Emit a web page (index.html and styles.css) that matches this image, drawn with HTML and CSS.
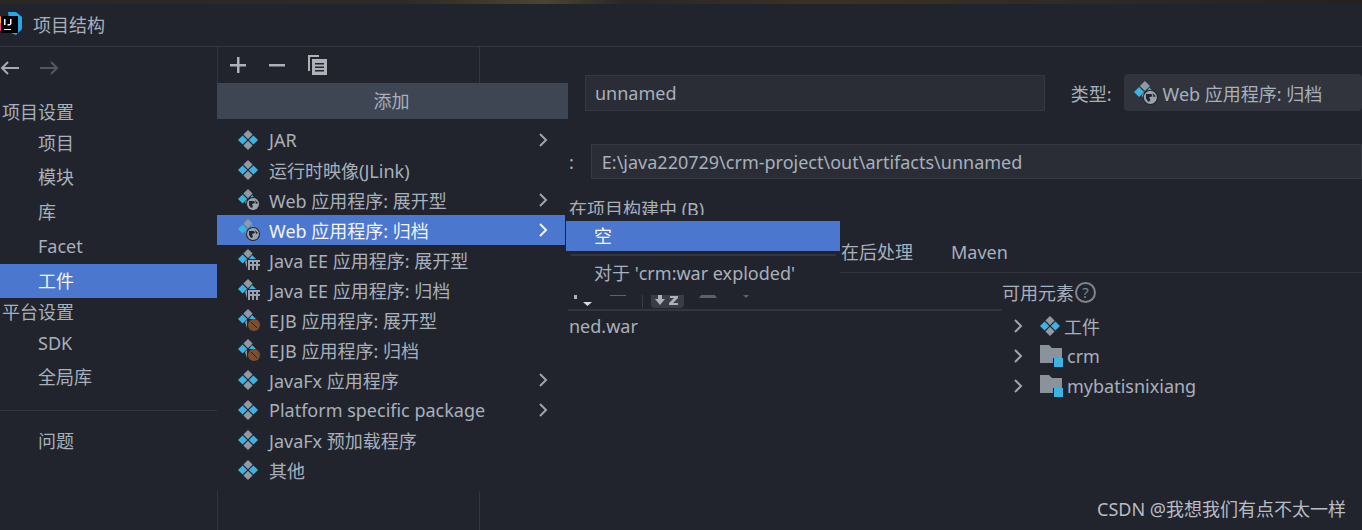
FILE: index.html
```html
<!DOCTYPE html>
<html lang="zh-CN">
<head>
    <meta charset="UTF-8">
    <meta name="viewport" content="width=device-width, initial-scale=1.0">
    <title>项目结构</title>
    <link rel="stylesheet" href="styles.css">
</head>
<body>
    <svg class="defs" width="0" height="0">
        <symbol id="art" viewBox="0 0 20 20">
            <path fill="#8f9aa5" d="M10 0l4.600 4.600-4.600 4.600-4.600-4.600zM10 10.800l4.600 4.600-4.600 4.600-4.600-4.600z"/>
            <path fill="#3db3e3" d="M4.600 5.400l4.600 4.600-4.600 4.600L0 10zM15.400 5.400L20 10l-4.600 4.600-4.600-4.600z"/>
        </symbol>
        <symbol id="art-web" viewBox="0 0 22 22">
            <path fill="#8f9aa5" d="M10 0l4.600 4.600-4.600 4.600-4.600-4.600zM7 13l2-2 2 2-2 4z"/>
            <path fill="#3db3e3" d="M4.600 5.400l4.600 4.600-4.600 4.600L0 10zM14 6l3.500 3.500H12z"/>
            <circle cx="15" cy="15" r="7" fill="#21242d"/>
            <circle cx="15" cy="15" r="6" fill="#9aa3ad"/>
            <path fill="#21242d" d="M11 12h5l1 2-3 1 1 3-2 1-2-3zM17 11l3 3-2 1z"/>
        </symbol>
        <symbol id="art-ee" viewBox="0 0 22 22">
            <path fill="#8f9aa5" d="M10 0l4.600 4.600-4.600 4.600-4.600-4.600zM7 13l2-2v8z"/>
            <path fill="#3db3e3" d="M4.600 5.400l4.600 4.600-4.600 4.600L0 10zM14 6l4 4h-7z"/>
            <path fill="#9aa3ad" d="M10 11h12v10H10z"/>
            <path fill="#21242d" d="M12 13h2v2h-2zM16 13h2v2h-2zM20 13h2v2h-2zM12 17h2v4h-2zM16 17h2v4h-2zM20 17h2v4h-2z"/>
        </symbol>
        <symbol id="art-ejb" viewBox="0 0 22 22">
            <path fill="#8f9aa5" d="M10 0l4.600 4.600-4.600 4.600-4.600-4.600zM7 13l2-2v8z"/>
            <path fill="#3db3e3" d="M4.600 5.400l4.600 4.600-4.600 4.600L0 10zM14 6l4 4h-7z"/>
            <circle cx="16" cy="16" r="6" fill="#7b4f2c"/>
            <path stroke="#21242d" stroke-width="1" d="M13 13l6 6"/>
        </symbol>
        <symbol id="chev" viewBox="0 0 10 14">
            <path fill="none" stroke="currentColor" stroke-width="2" d="M2 1l6 6-6 6"/>
        </symbol>
        <symbol id="folder" viewBox="0 0 23 22">
            <path fill="#8a939c" d="M0 0h9l3 3h10v15H0z"/>
            <path fill="#21242d" d="M13 13h10v9H13z"/>
            <path fill="#3db3e3" d="M14 13h9v9h-9z"/>
        </symbol>
    </svg>

    <div class="window">
        <div class="strip"></div>
        <div class="titlebar">
            <svg class="logo" width="22" height="24" viewBox="0 0 22 24">
                <path fill="#25a8e8" d="M8 0h8l6 5v12l-6 6-5-2z"/>
                <path fill="#fc3a7d" d="M-3 4h10v17l-8-3z"/>
                <path fill="#fdb10f" d="M-2 5h4v6h-4z"/>
                <path fill="#000" d="M1 4h17v17H1z"/>
                <path fill="#fff" d="M4 7h1.500v6H4zM8 7h3.500v5l-1.500 1.500H7.500V12H10V7H8zM4 17h7v1H4z"/>
            </svg>
            <span>项目结构</span>
        </div>
        <div class="main">
            <div class="sidebar">
                <div class="nav-arrows">
                    <svg width="20" height="14" viewBox="0 0 20 14"><path fill="none" stroke="#a6abb1" stroke-width="2" d="M19 7H2M8 1L2 7l6 6"/></svg>
                    <svg width="20" height="14" viewBox="0 0 20 14"><path fill="none" stroke="#54575c" stroke-width="2" d="M0 7h17M11 1l6 6-6 6"/></svg>
                </div>
                <div class="nav-head">项目设置</div>
                <div class="nav-item">项目</div>
                <div class="nav-item">模块</div>
                <div class="nav-item">库</div>
                <div class="nav-item">Facet</div>
                <div class="nav-item active">工件</div>
                <div class="nav-head">平台设置</div>
                <div class="nav-item">SDK</div>
                <div class="nav-item">全局库</div>
                <div class="nav-sep"></div>
                <div class="nav-item">问题</div>
            </div>

            <div class="list-panel">
                <div class="list-tools">
                    <svg width="16" height="16" viewBox="0 0 16 16"><path fill="#aeb2b7" d="M7 0h2.500v7H16v2.500H9.500V16H7V9.500H0V7h7z"/></svg>
                    <svg width="16" height="16" viewBox="0 0 16 16"><path fill="#aeb2b7" d="M0 7h16v2.500H0z"/></svg>
                    <svg width="19" height="20" viewBox="0 0 19 20"><path fill="#aeb2b7" d="M0 0h11v2H2v14H0zM4 4h15v16H4z"/><path fill="#21242d" d="M7 8h9v1.500H7zM7 11.500h9V13H7zM7 15h9v1.500H7z"/></svg>
                </div>
            </div>

            <div class="detail">
                <div class="name-row">
                    <div class="field name-field">unnamed</div>
                    <span class="type-label">类型:</span>
                    <div class="combo">
                        <svg width="24" height="24"><use href="#art-web"/></svg>
                        <span>Web 应用程序: 归档</span>
                    </div>
                </div>
                <div class="path-row">
                    <span>:</span>
                    <div class="field path-field">E:\java220729\crm-project\out\artifacts\unnamed</div>
                </div>
                <div class="check-row">在项目构建中 (B)</div>
                <div class="tabs">
                    <span>在后处理</span>
                    <span>Maven</span>
                </div>
                <div class="layout">
                    <div class="layout-left">
                        <div class="layout-tools">
                            <svg width="24" height="14" viewBox="0 0 24 14"><path fill="#aeb2b7" d="M4 0h3v6H4z"/><path fill="#d8dadd" d="M13 9h9l-4.500 4z"/></svg>
                            <svg class="minus" width="16" height="4" viewBox="0 0 16 4"><path fill="#5e6268" d="M0 0h16v2H0z"/></svg>
                            <i class="tool-sep"></i>
                            <div class="tool-on">
                                <svg width="26" height="12" viewBox="0 0 26 12"><path fill="#aeb2b7" d="M3 1h4v4h3l-5 6-5-6h3zM15 2h8v2l-5 5h5v2h-9V9l5-5h-4z"/></svg>
                            </div>
                            <svg class="up" width="18" height="4" viewBox="0 0 18 4"><path fill="#5e6268" d="M3 0h12l3 4H0z"/></svg>
                            <svg class="drop" width="8" height="4" viewBox="0 0 8 4"><path fill="#5e6268" d="M0 0h8L4 4z"/></svg>
                        </div>
                        <div class="layout-file">ned.war</div>
                    </div>
                    <div class="layout-right">
                        <div class="avail">可用元素<span class="help">?</span></div>
                        <div class="tree-row">
                            <svg class="chev" width="10" height="14"><use href="#chev"/></svg>
                            <svg width="20" height="20"><use href="#art"/></svg>
                            <span>工件</span>
                        </div>
                        <div class="tree-row">
                            <svg class="chev" width="10" height="14"><use href="#chev"/></svg>
                            <svg width="23" height="22"><use href="#folder"/></svg>
                            <span>crm</span>
                        </div>
                        <div class="tree-row">
                            <svg class="chev" width="10" height="14"><use href="#chev"/></svg>
                            <svg width="23" height="22"><use href="#folder"/></svg>
                            <span>mybatisnixiang</span>
                        </div>
                    </div>
                </div>
            </div>
        </div>

        <div class="popup">
            <div class="popup-head">添加</div>
            <div class="menu-row"><svg width="20" height="20"><use href="#art"/></svg><span>JAR</span><svg class="chev" width="10" height="14"><use href="#chev"/></svg></div>
            <div class="menu-row"><svg width="20" height="20"><use href="#art"/></svg><span>运行时映像(JLink)</span></div>
            <div class="menu-row"><svg width="22" height="22"><use href="#art-web"/></svg><span>Web 应用程序: 展开型</span><svg class="chev" width="10" height="14"><use href="#chev"/></svg></div>
            <div class="menu-row selected"><svg width="22" height="22"><use href="#art-web"/></svg><span>Web 应用程序: 归档</span><svg class="chev" width="10" height="14"><use href="#chev"/></svg></div>
            <div class="menu-row"><svg width="22" height="22"><use href="#art-ee"/></svg><span>Java EE 应用程序: 展开型</span></div>
            <div class="menu-row"><svg width="22" height="22"><use href="#art-ee"/></svg><span>Java EE 应用程序: 归档</span></div>
            <div class="menu-row"><svg width="22" height="22"><use href="#art-ejb"/></svg><span>EJB 应用程序: 展开型</span></div>
            <div class="menu-row"><svg width="22" height="22"><use href="#art-ejb"/></svg><span>EJB 应用程序: 归档</span></div>
            <div class="menu-row"><svg width="20" height="20"><use href="#art"/></svg><span>JavaFx 应用程序</span><svg class="chev" width="10" height="14"><use href="#chev"/></svg></div>
            <div class="menu-row"><svg width="20" height="20"><use href="#art"/></svg><span>Platform specific package</span><svg class="chev" width="10" height="14"><use href="#chev"/></svg></div>
            <div class="menu-row"><svg width="20" height="20"><use href="#art"/></svg><span>JavaFx 预加载程序</span></div>
            <div class="menu-row"><svg width="20" height="20"><use href="#art"/></svg><span>其他</span></div>
        </div>

        <div class="submenu">
            <div class="sub-row selected">空</div>
            <div class="sub-sep"></div>
            <div class="sub-row">对于 'crm:war exploded'</div>
        </div>

        <div class="watermark">CSDN @我想我们有点不太一样</div>
    </div>
</body>
</html>
```

FILE: styles.css
```css
* {
    box-sizing: border-box;
}

body {
    margin: 0;
    background-color: #21242d;
    font-family: "Noto Sans", "Noto Sans CJK SC", sans-serif;
    font-size: 18px;
    color: #a8b0bb;
}

.defs {
    position: absolute;
}

svg {
    flex: none;
    display: block;
}

.window {
    position: relative;
    width: 1362px;
    height: 530px;
    overflow: hidden;
    display: flex;
    flex-direction: column;
}

.strip {
    height: 4px;
    background: linear-gradient(90deg, #2a2622 0%, #2f2a24 30%, #4a4436 40%, #2a2622 46%, #3a3228 60%, #24211f 100%);
}

.titlebar {
    height: 43px;
    display: flex;
    align-items: center;
    gap: 11px;
    padding-bottom: 3px;
    border-bottom: 1px solid #33363e;
}

.main {
    flex: 1;
    display: flex;
    min-height: 0;
}

/* left nav */
.sidebar {
    width: 217px;
    flex: none;
}

.nav-arrows {
    display: flex;
    gap: 20px;
    height: 51px;
    padding-top: 14px;
}

.nav-head {
    height: 28px;
    line-height: 28px;
    padding-left: 2px;
}

.nav-item {
    height: 34.4px;
    line-height: 34.4px;
    padding-left: 38px;
}

.nav-item.active {
    background-color: #4c77cf;
    color: #f2f4f8;
}

.nav-sep {
    height: 1px;
    margin: 15px 0 13px;
    background-color: #33363e;
}

/* artifact list */
.list-panel {
    width: 263px;
    flex: none;
    border-left: 1px solid #33363e;
    border-right: 1px solid #33363e;
}

.list-tools {
    display: flex;
    align-items: center;
    gap: 23px;
    height: 36px;
    padding-left: 12px;
}

/* detail */
.detail {
    flex: 1;
    min-width: 0;
    display: flex;
    flex-direction: column;
    padding-left: 89px;
}

.field {
    background-color: #2a2d36;
    border: 1px solid #363941;
    display: flex;
    align-items: center;
}

.name-row {
    display: flex;
    align-items: center;
    margin-top: 27px;
    height: 37px;
    white-space: nowrap;
}

.name-field {
    width: 502px;
    height: 36px;
    margin-left: 16px;
    padding-left: 9px;
}

.type-label {
    margin-left: 26px;
    margin-right: 12px;
}

.combo {
    display: flex;
    align-items: center;
    gap: 5px;
    width: 260px;
    height: 37px;
    padding-left: 10px;
    background-color: #31343d;
    border-radius: 4px;
}

.path-row {
    display: flex;
    align-items: center;
    gap: 17px;
    margin-top: 33px;
    white-space: nowrap;
}

.path-field {
    width: 800px;
    height: 35px;
    padding-left: 10px;
}

.check-row {
    margin-top: 18px;
    height: 24px;
    line-height: 24px;
}

.tabs {
    display: flex;
    gap: 38px;
    height: 52px;
    padding: 18px 0 0 273px;
    margin-left: -89px;
    padding-left: 361px;
    border-bottom: 1px solid #33363e;
    line-height: 26px;
}

.layout {
    flex: 1;
    display: flex;
    margin-left: -89px;
}

.layout-left {
    width: 522px;
    flex: none;
    padding-left: 89px;
}

.layout-tools {
    height: 38px;
    display: flex;
    align-items: flex-start;
    padding-top: 20px;
    margin-left: -89px;
    padding-left: 90px;
    border-bottom: 2px solid #33363e;
}

.minus {
    margin: 1px 0 0 16px;
}

.tool-sep {
    width: 1px;
    height: 15px;
    margin-left: 16px;
    background-color: #3a3d45;
}

.tool-on {
    width: 33px;
    height: 15px;
    margin-left: 8px;
    padding: 1px 0 0 4px;
    background-color: #3a3d46;
    border-radius: 0 0 4px 4px;
}

.up {
    margin: 1px 0 0 15px;
}

.drop {
    margin: 1px 0 0 25px;
}

.layout-file {
    line-height: 30px;
}

.layout-right {
    flex: 1;
    white-space: nowrap;
}

.avail {
    display: flex;
    align-items: center;
    gap: 1px;
    height: 38px;
    padding: 0 0 0 0;
    margin-bottom: 0;
}

.help {
    width: 21px;
    height: 21px;
    border: 2px solid #80858d;
    border-radius: 50%;
    font-size: 15px;
    line-height: 17px;
    text-align: center;
    color: #80858d;
}

.tree-row {
    display: flex;
    align-items: center;
    height: 30px;
    padding-left: 11px;
    color: #a8b0bb;
}

.tree-row .chev {
    color: #a0a4aa;
    margin-right: 21px;
}

.tree-row svg + svg {
    margin-left: -4px;
    margin-right: 4px;
}

/* add popup */
.popup {
    position: absolute;
    left: 217px;
    top: 83px;
    width: 351px;
    height: 408px;
    background-color: #21242d;
}

.popup-head {
    height: 36px;
    line-height: 36px;
    padding-right: 2px;
    text-align: center;
    background-color: #3f4653;
    margin-bottom: 6px;
}

.menu-row {
    display: flex;
    align-items: center;
    height: 30px;
    width: 348px;
    padding-left: 21px;
    white-space: nowrap;
}

.menu-row span {
    position: absolute;
    left: 52px;
}

.menu-row .chev {
    margin-left: auto;
    margin-right: 17px;
    color: #a0a4aa;
}

.menu-row.selected {
    background-color: #4c77cf;
    color: #f2f4f8;
}

.menu-row.selected .chev {
    color: #f2f4f8;
}

.submenu {
    position: absolute;
    left: 566px;
    top: 215px;
    width: 274px;
    height: 80px;
    padding-top: 6px;
    background-color: #21242d;
}

.sub-row {
    height: 30px;
    line-height: 30px;
    padding-left: 28px;
    white-space: nowrap;
}

.sub-row.selected {
    background-color: #4c77cf;
    color: #f2f4f8;
}

.sub-sep {
    height: 2px;
    margin: 3px 4px 2px 5px;
    background-color: #33363e;
}

.watermark {
    position: absolute;
    right: 16px;
    bottom: 9px;
    color: #b9bcc2;
}
</style>
```
